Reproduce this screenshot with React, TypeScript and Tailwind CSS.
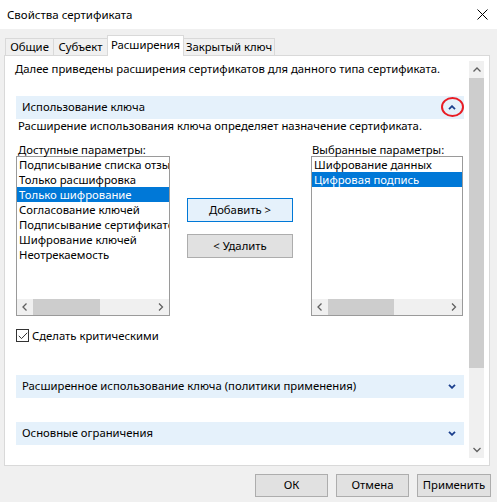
import type { ReactNode } from 'react'

const available = [
  'Подписывание списка отзыва',
  'Только расшифровка',
  'Только шифрование',
  'Согласование ключей',
  'Подписывание сертификатов',
  'Шифрование ключей',
  'Неотрекаемость',
]

const chosen = ['Шифрование данных', 'Цифровая подпись']

// small bold chevron used in the section bands
function BandChevron({ up }: { up?: boolean }) {
  return (
    <svg width="8" height="5" viewBox="0 0 8 5" className="block">
      <polyline
        points={up ? '1,4.2 4,1.2 7,4.2' : '1,0.8 4,3.8 7,0.8'}
        fill="none"
        stroke="#1a3e8c"
        strokeWidth="1.8"
      />
    </svg>
  )
}

// thin gray arrow for scrollbars
function ScrollArrow({ dir }: { dir: 'up' | 'down' | 'left' | 'right' }) {
  const pts = {
    up: '0.5,4.5 4,1 7.5,4.5',
    down: '0.5,1 4,4.5 7.5,1',
    left: '4.5,0.5 1,4 4.5,7.5',
    right: '1,0.5 4.5,4 1,7.5',
  }[dir]
  const vertical = dir === 'up' || dir === 'down'
  return (
    <svg
      width={vertical ? 8 : 6}
      height={vertical ? 6 : 8}
      viewBox={vertical ? '0 0 8 6' : '0 0 6 8'}
      className="block"
    >
      <polyline points={pts} fill="none" stroke="#606060" strokeWidth="1.3" />
    </svg>
  )
}

function Band({ children, up, circled }: { children: ReactNode; up?: boolean; circled?: boolean }) {
  return (
    <div className="relative flex h-[23px] items-center justify-between bg-[#e5f1fb] pl-[6px] pr-[8px]">
      <span className="whitespace-nowrap">{children}</span>
      <BandChevron up={up} />
      {circled && (
        <div className="absolute left-[425px] top-[1px] h-[20px] w-[23px] rounded-[50%] border-2 border-[#e81c24]" />
      )}
    </div>
  )
}

function ListBox({ items, selected, thumbWidth }: { items: string[]; selected: number; thumbWidth: number }) {
  return (
    <div className="flex h-[160px] flex-col border border-[#9a9a9a] bg-white">
      <div className="flex-1 overflow-hidden">
        {items.map((it, i) => (
          <div
            key={it}
            className={`h-[15px] whitespace-nowrap pl-[2px] leading-[15px] ${
              i === selected ? 'bg-[#0078d7] text-white' : 'text-black'
            }`}
          >
            {it}
          </div>
        ))}
      </div>
      <div className="flex h-[16px] items-center bg-[#f0f0f0]">
        <div className="flex w-[16px] justify-center">
          <ScrollArrow dir="left" />
        </div>
        <div className="h-full bg-[#cdcdcd]" style={{ width: thumbWidth }} />
        <div className="flex-1" />
        <div className="flex w-[16px] justify-center">
          <ScrollArrow dir="right" />
        </div>
      </div>
    </div>
  )
}

export default function App() {
  return (
    <div className="flex h-[502px] w-[497px] flex-col whitespace-nowrap bg-[#f0f0f0] font-['Noto_Sans',sans-serif] text-[11.3px] text-black">
      {/* title bar */}
      <div className="flex h-[29px] items-center justify-between bg-white pl-[7px] pr-[9px]">
        <span className="text-[11.5px]">Свойства сертификата</span>
        <svg width="11" height="11" viewBox="0 0 11 11">
          <path d="M0.5 0.5 L10.5 10.5 M10.5 0.5 L0.5 10.5" stroke="#000" strokeWidth="1" />
        </svg>
      </div>

      {/* tabs */}
      <div className="relative z-10 mt-[6px] flex h-[21px] items-end pl-[5px]">
        <div className="mb-px flex h-[17px] w-[48px] items-center justify-center border-l border-t border-[#d9d9d9]">
          Общие
        </div>
        <div className="mb-px flex h-[17px] w-[54px] items-center justify-center border-l border-t border-[#d9d9d9]">
          Субъект
        </div>
        <div className="flex h-[21px] w-[77px] items-start justify-center border-x border-t border-[#d9d9d9] bg-white pt-[1px]">
          Расширения
        </div>
        <div className="mb-px flex h-[17px] w-[91px] items-center justify-center border-r border-t border-[#d9d9d9]">
          Закрытый ключ
        </div>
      </div>

      {/* tab page */}
      <div className="-mt-px ml-[4px] flex h-[411px] w-[486px] border border-[#d9d9d9] bg-white">
        <div className="flex-1 overflow-hidden pl-[11px] pr-[5px]">
          <div className="-ml-px mt-[5px] leading-[15px]">
            Далее приведены расширения сертификатов для данного типа сертификата.
          </div>

          <div className="mt-[20px]">
            <Band up circled>
              Использование ключа
            </Band>
          </div>
          <div className="ml-[2px] mt-[-1px] leading-[15px]">
            Расширение использования ключа определяет назначение сертификата.
          </div>

          <div className="mt-[10px] flex">
            <div className="w-[154px]">
              <div className="ml-[2px] h-[13px] leading-[13px]">Доступные параметры:</div>
              <ListBox items={available} selected={2} thumbWidth={67} />
            </div>
            <div className="ml-[17px] flex w-[106px] flex-col gap-[12px] pt-[55px]">
              <div className="flex h-[24px] items-center justify-center border border-[#0078d7] bg-[#e5f1fb]">
                Добавить &gt;
              </div>
              <div className="flex h-[24px] items-center justify-center border border-[#adadad] bg-[#e1e1e1]">
                &lt; Удалить
              </div>
            </div>
            <div className="ml-[18px] w-[152px]">
              <div className="ml-px h-[13px] leading-[13px]">Выбранные параметры:</div>
              <ListBox items={chosen} selected={1} thumbWidth={66} />
            </div>
          </div>

          <div className="mt-[12px] flex items-center">
            <div className="flex h-[13px] w-[13px] items-center justify-center border border-[#333]">
              <svg width="10" height="8" viewBox="0 0 10 8">
                <polyline points="0.8,3.8 3.5,6.6 9.2,0.8" fill="none" stroke="#333" strokeWidth="1" />
              </svg>
            </div>
            <span className="ml-[3px] leading-[15px]">Сделать критическими</span>
          </div>

          <div className="mt-[32px]">
            <Band>Расширенное использование ключа (политики применения)</Band>
          </div>
          <div className="mt-[24px]">
            <Band>Основные ограничения</Band>
          </div>
        </div>

        {/* vertical scrollbar */}
        <div className="mb-[7px] mr-[5px] mt-[5px] flex w-[15px] flex-col bg-[#f0f0f0]">
          <div className="flex h-[17px] items-center justify-center">
            <ScrollArrow dir="up" />
          </div>
          <div className="h-[290px] bg-[#cdcdcd]" />
          <div className="flex-1" />
          <div className="flex h-[17px] items-center justify-center">
            <ScrollArrow dir="down" />
          </div>
        </div>
      </div>

      {/* dialog buttons */}
      <div className="mt-[8px] flex justify-end gap-[8px] pr-[6px]">
        <div className="flex h-[23px] w-[73px] items-center justify-center border border-[#adadad] bg-[#e1e1e1]">
          ОК
        </div>
        <div className="flex h-[23px] w-[73px] items-center justify-center border border-[#adadad] bg-[#e1e1e1]">
          Отмена
        </div>
        <div className="flex h-[23px] w-[74px] items-center justify-center border border-[#adadad] bg-[#e1e1e1]">
          Применить
        </div>
      </div>
    </div>
  )
}
